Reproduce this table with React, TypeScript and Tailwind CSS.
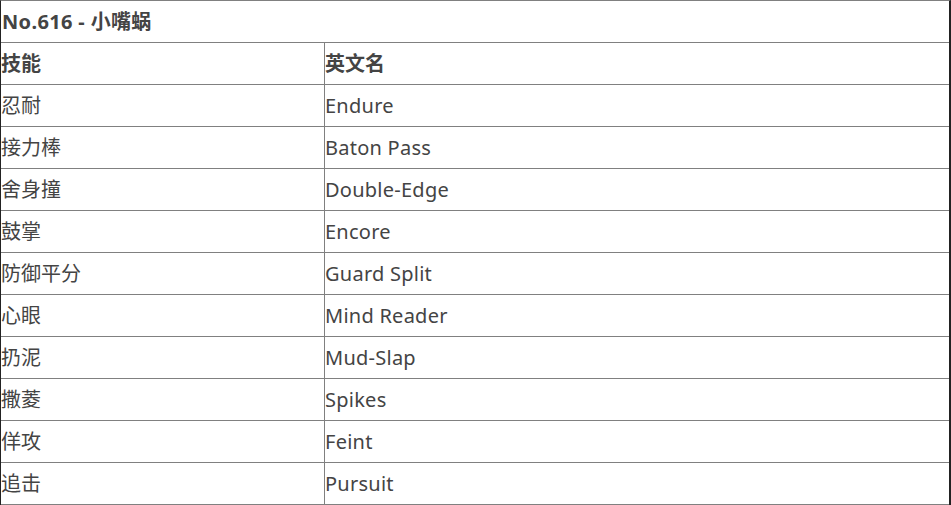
import React from "react";

const rows: [string, string][] = [
  ["忍耐", "Endure"],
  ["接力棒", "Baton Pass"],
  ["舍身撞", "Double-Edge"],
  ["鼓掌", "Encore"],
  ["防御平分", "Guard Split"],
  ["心眼", "Mind Reader"],
  ["扔泥", "Mud-Slap"],
  ["撒菱", "Spikes"],
  ["佯攻", "Feint"],
  ["追击", "Pursuit"],
];

export default function App() {
  return (
    <div
      className="w-[951px] h-[505px] bg-white text-[#444] text-[20px] leading-none"
      style={{ fontFamily: '"Noto Sans", "Noto Sans CJK SC", sans-serif' }}
    >
      <div className="flex flex-col border-t border-l border-r-2 border-t-[#808080] border-l-[#222] border-r-[#222]">
        <div className="h-[42px] flex items-center border-b border-[#808080] font-bold pl-px tracking-[0.35px]">
          No.616 - 小嘴蜗
        </div>
        <div className="h-[42px] flex border-b border-[#808080] font-bold">
          <div className="w-[323px] flex items-center">技能</div>
          <div className="flex-1 flex items-center border-l border-[#808080]">英文名</div>
        </div>
        {rows.map(([zh, en]) => (
          <div key={en} className="h-[42px] flex border-b border-[#808080]">
            <div className="w-[323px] flex items-center">{zh}</div>
            <div className="flex-1 flex items-center border-l border-[#808080] tracking-[0.25px]">{en}</div>
          </div>
        ))}
      </div>
    </div>
  );
}
